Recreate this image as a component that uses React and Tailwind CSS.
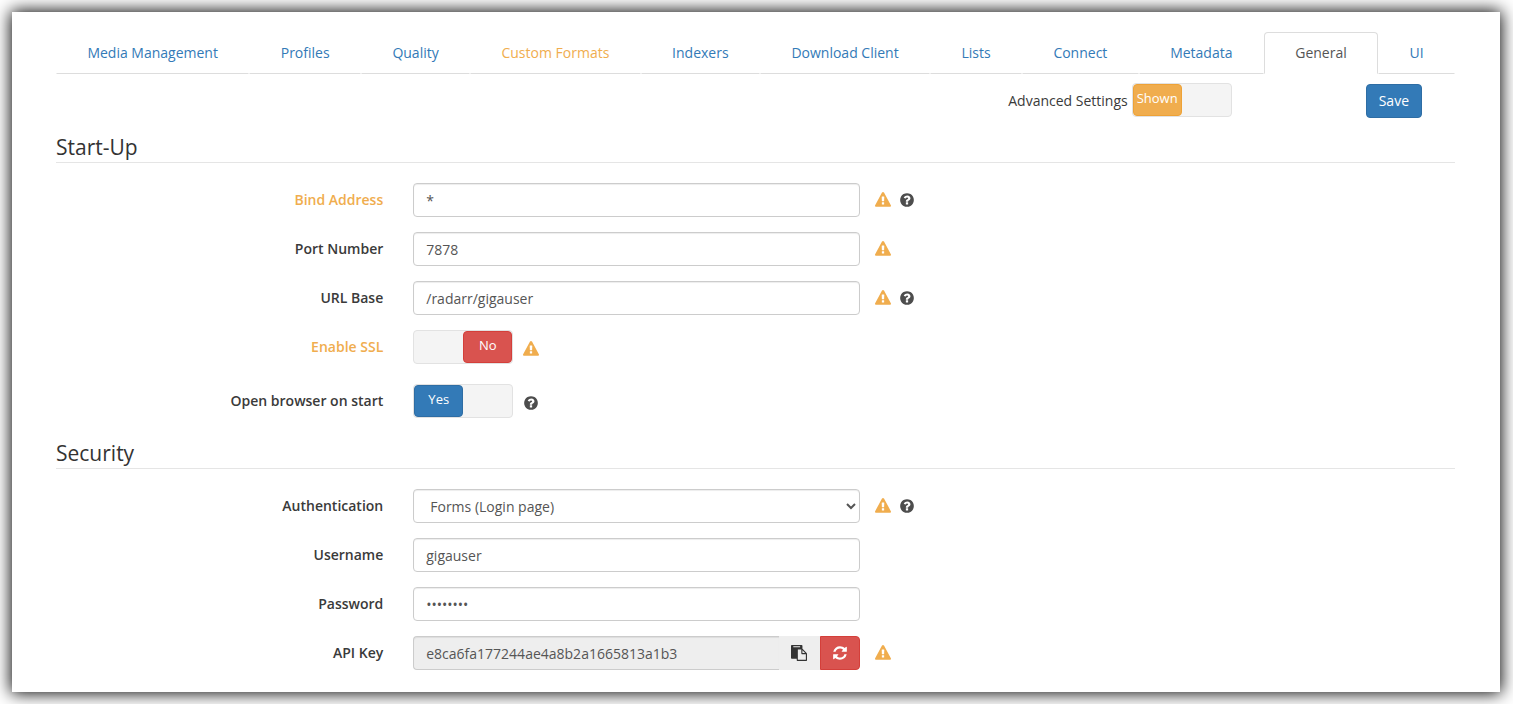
import React, { useState } from 'react'
import clsx from 'clsx'

const TABS = [
  'Media Management',
  'Profiles',
  'Quality',
  'Custom Formats',
  'Indexers',
  'Download Client',
  'Lists',
  'Connect',
  'Metadata',
  'General',
  'UI',
]

const ADVANCED_TABS = ['Custom Formats']

const INPUT_CLASS =
  'h-[34px] w-full min-w-0 rounded border border-[#ccc] bg-white px-3 py-1.5 text-sm text-[#555] shadow-[inset_0_1px_1px_rgba(0,0,0,0.075)] outline-none focus:border-[#66afe9]'

const HANDLE_COLORS = {
  primary: 'border-[#2e6da4] bg-[#337ab7]',
  danger: 'border-[#d43f3a] bg-[#d9534f]',
  warning: 'border-[#eea236] bg-[#f0ad4e]',
}

// Font Awesome 4 glyphs
function Icon({ path, label, className }) {
  return (
    <svg
      viewBox="0 0 1792 1792"
      className={clsx('size-4 shrink-0', className)}
      fill="currentColor"
      role={label ? 'img' : undefined}
      aria-label={label}
      aria-hidden={label ? undefined : true}
    >
      <path d={path} />
    </svg>
  )
}

const WARNING_PATH =
  'M1024 1375v-190q0-14-9.5-23.5t-22.5-9.5h-192q-13 0-22.5 9.5t-9.5 23.5v190q0 14 9.5 23.5t22.5 9.5h192q13 0 22.5-9.5t9.5-23.5zm-2-374l18-459q0-12-10-19-13-11-24-11h-220q-11 0-24 11-10 7-10 21l17 457q0 10 10 16.5t24 6.5h185q14 0 23.5-6.5t10.5-16.5zm-14-934l768 1408q35 63-2 126-17 29-46.5 46t-63.5 17h-1536q-34 0-63.5-17t-46.5-46q-37-63-2-126l768-1408q17-31 47-49t65-18 65 18 47 49z'
const HELP_PATH =
  'M1024 1376v-192q0-14-9-23t-23-9h-192q-14 0-23 9t-9 23v192q0 14 9 23t23 9h192q14 0 23-9t9-23zm256-672q0-88-55.5-163t-138.5-116-170-41q-243 0-371 213-15 24 8 42l132 100q7 6 19 6 16 0 25-12 53-68 86-92 34-24 86-24 48 0 85.5 26t37.5 59q0 38-20 61t-68 45q-63 28-115.5 86.5t-52.5 125.5v36q0 14 9 23t23 9h192q14 0 23-9t9-23q0-19 21.5-49.5t54.5-49.5q32-18 49-28.5t46-35 44.5-48 28-60.5 12.5-81zm384 192q0 209-103 385.5t-279.5 279.5-385.5 103-385.5-103-279.5-279.5-103-385.5 103-385.5 279.5-279.5 385.5-103 385.5 103 279.5 279.5 103 385.5z'
const PASTE_PATH =
  'M768 1664h896v-640h-416q-40 0-68-28t-28-68v-416h-384v1152zm256-1440v-64q0-13-9.5-22.5t-22.5-9.5h-704q-13 0-22.5 9.5t-9.5 22.5v64q0 13 9.5 22.5t22.5 9.5h704q13 0 22.5-9.5t9.5-22.5zm256 672h299l-299-299v299zm512 128v672q0 40-28 68t-68 28h-960q-40 0-68-28t-28-68v-160h-544q-40 0-68-28t-28-68v-1344q0-40 28-68t68-28h1088q40 0 68 28t28 68v328q21 13 36 28l408 408q28 28 48 76t20 88z'
const REFRESH_PATH =
  'M1639 1056q0 5-1 7-64 268-268 434.5t-478 166.5q-146 0-282.5-55t-243.5-157l-129 129q-19 19-45 19t-45-19-19-45v-448q0-26 19-45t45-19h448q26 0 45 19t19 45-19 45l-137 137q71 66 161 102t187 36q134 0 250-65t186-179q11-17 53-117 8-23 30-23h192q13 0 22.5 9.5t9.5 22.5zm25-800v448q0 26-19 45t-45 19h-448q-26 0-45-19t-19-45 19-45l138-138q-148-137-349-137-134 0-250 65t-186 179q-11 17-53 117-8 23-30 23h-199q-13 0-22.5-9.5t-9.5-22.5v-7q65-268 270-434.5t480-166.5q146 0 284 55.5t245 156.5l130-129q19-19 45-19t45 19 19 45z'

function Hints({ warning, help }) {
  return (
    <div className="flex items-center gap-2">
      {warning && <Icon path={WARNING_PATH} label="Requires restart" className="text-[#f0ad4e]" />}
      {help && <Icon path={HELP_PATH} label="Help" className="text-[#4d4d4d]" />}
    </div>
  )
}

function Toggle({ id, checked, onChange, on = 'Yes', off = 'No', onColor = 'primary', offColor = 'danger' }) {
  return (
    <label
      htmlFor={id}
      className={clsx(
        'flex h-[34px] w-[100px] shrink-0 cursor-pointer rounded border border-[#e2e2e2] bg-[#f4f4f4]',
        !checked && 'justify-end',
      )}
    >
      <input id={id} type="checkbox" className="sr-only" checked={checked} onChange={(e) => onChange(e.target.checked)} />
      <span
        className={clsx(
          'h-full w-1/2 rounded border text-center text-[13px] leading-[26px] text-white',
          HANDLE_COLORS[checked ? onColor : offColor],
        )}
      >
        {checked ? on : off}
      </span>
    </label>
  )
}

function Section({ title, children }) {
  return (
    <section>
      <h2 className="mb-5 border-b border-[#e5e5e5] text-[21px] leading-[30px] text-[#333]">{title}</h2>
      {children}
    </section>
  )
}

function FieldLabel({ id, advanced, children }) {
  return (
    <label
      htmlFor={id}
      className={clsx(
        'col-span-3 px-[15px] pt-[7px] text-right text-sm font-semibold',
        advanced ? 'text-[#f0ad4e]' : 'text-[#3a3a3a]',
      )}
    >
      {children}
    </label>
  )
}

function Field({ id, label, advanced, children, warning, help }) {
  return (
    <div className="-mx-[15px] mb-[15px] grid grid-cols-12">
      <FieldLabel id={id} advanced={advanced}>{label}</FieldLabel>
      <div className="col-span-4 px-[15px]">{children}</div>
      <div className="col-span-5 flex items-center">
        <Hints warning={warning} help={help} />
      </div>
    </div>
  )
}

function ToggleField({ id, label, advanced, checked, onChange, warning, help }) {
  return (
    <div className="-mx-[15px] mb-[15px] grid grid-cols-12">
      <FieldLabel id={id} advanced={advanced}>{label}</FieldLabel>
      <div className="col-span-8 flex h-[38px] gap-[10px] px-[15px] mb-px">
        <Toggle id={id} checked={checked} onChange={onChange} />
        <Hints warning={warning} help={help} />
      </div>
    </div>
  )
}

export default function App() {
  const [activeTab, setActiveTab] = useState('General')
  const [advanced, setAdvanced] = useState(true)
  const [settings, setSettings] = useState({
    bindAddress: '*',
    port: '7878',
    urlBase: '/radarr/gigauser',
    enableSsl: false,
    launchBrowser: true,
    authentication: 'forms',
    username: 'gigauser',
    password: 'gigauser',
    apiKey: 'e8ca6fa177244ae4a8b2a1665813a1b3',
  })

  const update = (key) => (value) => setSettings((prev) => ({ ...prev, [key]: value }))
  const bind = (key) => ({
    id: key,
    value: settings[key],
    onChange: (e) => update(key)(e.target.value),
  })

  return (
    <div className="flow-root bg-white font-['Open_Sans',sans-serif] text-sm leading-5 text-[#3a3a3a]">
      <main className="m-3 mr-[13px] bg-white pt-5 pr-[45px] pb-[7px] pl-11 shadow-[0_0_16px_1px_#000]">
        <nav className="flex">
          {TABS.map((tab) => (
            <a
              key={tab}
              href="#"
              onClick={(e) => {
                e.preventDefault()
                setActiveTab(tab)
              }}
              className={clsx(
                'flex-auto rounded-t border px-[15px] py-[10px] text-center whitespace-nowrap',
                activeTab === tab
                  ? 'border-[#ddd] border-b-white text-[#555]'
                  : 'border-transparent border-b-[#ddd]',
                activeTab !== tab && (ADVANCED_TABS.includes(tab) ? 'text-[#f0ad4e]' : 'text-[#337ab7]'),
              )}
            >
              {tab}
            </a>
          ))}
        </nav>

        <div className="flex items-start justify-end pt-[9px] pr-[33px] pb-[14px]">
          <label htmlFor="advanced" className="mr-1 self-end pb-[7px]">Advanced Settings</label>
          <Toggle id="advanced" checked={advanced} onChange={setAdvanced} on="Shown" off="Hidden" onColor="warning" offColor="warning" />
          <button
            type="button"
            className="mt-px ml-[134px] h-[34px] rounded border border-[#2e6da4] bg-[#337ab7] px-3 text-white"
          >
            Save
          </button>
        </div>

        <Section title="Start-Up">
          <Field id="bindAddress" label="Bind Address" advanced warning help>
            <input type="text" className={INPUT_CLASS} {...bind('bindAddress')} />
          </Field>
          <Field id="port" label="Port Number" warning>
            <input type="text" className={INPUT_CLASS} {...bind('port')} />
          </Field>
          <Field id="urlBase" label="URL Base" warning help>
            <input type="text" className={INPUT_CLASS} {...bind('urlBase')} />
          </Field>
          <ToggleField id="enableSsl" label="Enable SSL" advanced warning checked={settings.enableSsl} onChange={update('enableSsl')} />
          <ToggleField id="launchBrowser" label="Open browser on start" help checked={settings.launchBrowser} onChange={update('launchBrowser')} />
        </Section>

        <Section title="Security">
          <Field id="authentication" label="Authentication" warning help>
            <select className={INPUT_CLASS} {...bind('authentication')}>
              <option value="none">None</option>
              <option value="basic">Basic (Browser popup)</option>
              <option value="forms">Forms (Login page)</option>
            </select>
          </Field>
          <Field id="username" label="Username">
            <input type="text" className={INPUT_CLASS} {...bind('username')} />
          </Field>
          <Field id="password" label="Password">
            <input type="password" className={INPUT_CLASS} {...bind('password')} />
          </Field>
          <Field id="apiKey" label="API Key" warning>
            <div className="flex">
              <input
                id="apiKey"
                type="text"
                readOnly
                value={settings.apiKey}
                className="h-[34px] min-w-0 flex-1 rounded-l border border-r-0 border-[#ccc] bg-[#eee] px-3 py-1.5 text-sm text-[#555] shadow-[inset_0_1px_1px_rgba(0,0,0,0.075)] outline-none"
              />
              <button type="button" aria-label="Copy API key" className="flex h-[34px] w-[41px] items-center justify-center bg-[#eee] text-[#333]">
                <Icon path={PASTE_PATH} />
              </button>
              <button type="button" aria-label="Reset API key" className="flex h-[34px] w-10 items-center justify-center rounded-r border border-[#d43f3a] bg-[#d9534f] text-white">
                <Icon path={REFRESH_PATH} />
              </button>
            </div>
          </Field>
        </Section>
      </main>
    </div>
  )
}
